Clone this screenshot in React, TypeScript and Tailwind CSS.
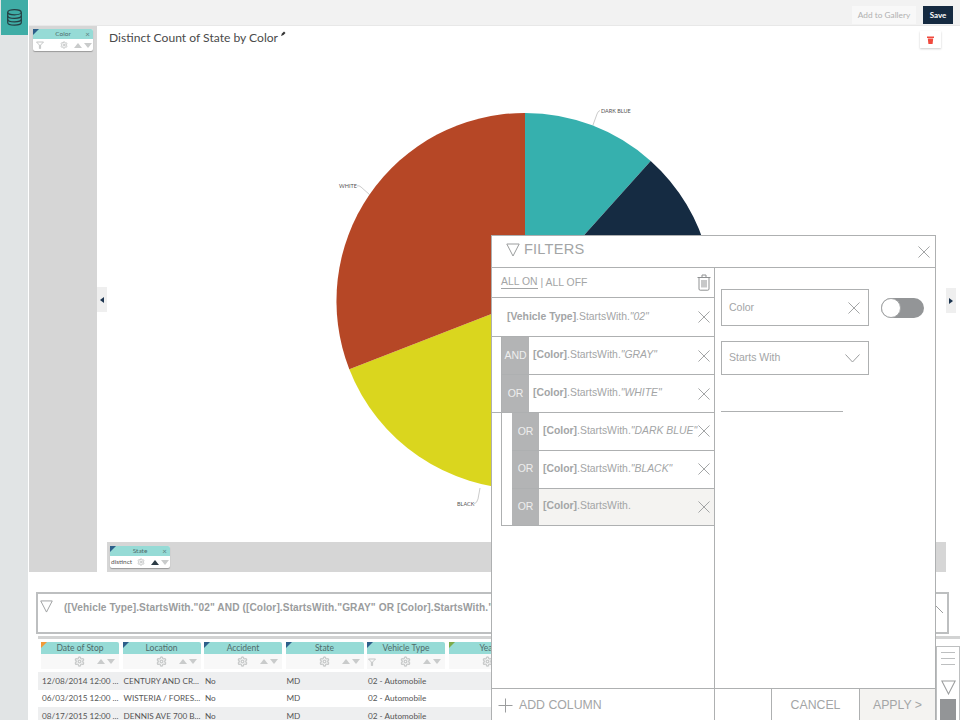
import { Settings } from "lucide-react";

const COLUMNS = [
  { name: "Date of Stop", corner: "border-t-[#f29a38]", funnel: false },
  { name: "Location", corner: "border-t-[#2c5f8a]", funnel: false },
  { name: "Accident", corner: "border-t-[#2c5f8a]", funnel: false },
  { name: "State", corner: "border-t-[#2c5f8a]", funnel: false },
  { name: "Vehicle Type", corner: "border-t-[#2c5f8a]", funnel: true },
  { name: "Year", corner: "border-t-[#7cab4a]", funnel: false },
];

const ROWS = [
  ["12/08/2014 12:00 ...", "CENTURY AND CR...", "No", "MD", "02 - Automobile"],
  ["06/03/2015 12:00 ...", "WISTERIA / FORES...", "No", "MD", "02 - Automobile"],
  ["08/17/2015 12:00 ...", "DENNIS AVE 700 B...", "No", "MD", "02 - Automobile"],
];

function Cross({ size = 13 }: { size?: number }) {
  return (
    <svg width={size} height={size} viewBox="0 0 13 13" className="shrink-0 text-[#9b9d9e]">
      <path d="M0.5 0.5 L12.5 12.5 M12.5 0.5 L0.5 12.5" stroke="currentColor" strokeWidth="1" fill="none" />
    </svg>
  );
}

function Triangle({ w = 14, h = 14 }: { w?: number; h?: number }) {
  return (
    <svg width={w} height={h} viewBox="0 0 14 14" className="shrink-0 text-[#9b9d9e]">
      <path d="M0.8 1 H13.2 L7 13 Z" stroke="currentColor" strokeWidth="1" fill="none" />
    </svg>
  );
}

function Funnel() {
  return (
    <svg width="8" height="8" viewBox="0 0 8 8" className="shrink-0 text-[#c4c6c6]">
      <path d="M0.5 1 H7.5 L4.6 4 V7.5 H3.4 V4 Z" stroke="currentColor" strokeWidth="1" fill="none" />
    </svg>
  );
}

function Sort({ upDark = false }: { upDark?: boolean }) {
  return (
    <div className="flex items-center gap-[2px]">
      <div className={`h-0 w-0 border-x-[4px] border-b-[5px] border-x-transparent ${upDark ? "border-b-[#2b3a44]" : "border-b-[#c9cbcb]"}`} />
      <div className="h-0 w-0 border-x-[4px] border-t-[5px] border-x-transparent border-t-[#c9cbcb]" />
    </div>
  );
}

function Corner({ color }: { color: string }) {
  return <div className={`absolute left-0 top-0 h-0 w-0 border-r-[6px] border-t-[6px] border-r-transparent ${color}`} />;
}

function FieldPill({ name, distinct }: { name: string; distinct?: boolean }) {
  return (
    <div className="relative w-[60px] rounded-[2px] bg-white shadow-[0_1px_1px_#9a9a9a]">
      <div className="flex h-[10px] items-center justify-center rounded-t-[2px] bg-[#96dbd6] text-[6.5px] text-[#4f6b6b]">
        {name}
      </div>
      <Corner color="border-t-[#2c5f8a]" />
      <div className="absolute right-[3px] top-0 text-[8px] leading-[10px] text-[#5f8383]">×</div>
      <div className="flex h-[12px] items-center pl-[1px] pr-[1px] text-[6.5px] text-[#555]">
        {distinct ? <span className="w-[25px]">distinct</span> : <div className="w-[25px] pl-[2px]"><Funnel /></div>}
        <Settings size={8} strokeWidth={3} className="ml-[1px] text-[#c4c6c6]" />
        <div className="ml-auto"><Sort upDark={distinct} /></div>
      </div>
    </div>
  );
}

function Clause({ field, value, block, first, active }: { field: string; value?: string; block: string; first?: boolean; active?: boolean }) {
  return (
    <div className={`flex h-[37.4px] ${first ? "" : "border-t border-[#aeb0b1]"}`}>
      <div className="flex w-[27px] shrink-0 items-center justify-center bg-[#b3b4b5] text-[10.5px] text-[#eeeeee]">
        {block}
      </div>
      <div className={`flex min-w-0 flex-1 items-center pr-[4px] ${active ? "bg-[#f4f3f1]" : ""}`}>
        <div className="min-w-0 flex-1 whitespace-nowrap pb-[2px] pl-[4px] text-[10.4px] text-[#a3a5a6]">
          <b>[{field}]</b>.StartsWith.{value && <i>"{value}"</i>}
        </div>
        <Cross size={12} />
      </div>
    </div>
  );
}

function FiltersDialog() {
  return (
    <div className="absolute left-[491px] top-[235px] flex h-[487px] w-[445px] flex-col border-[1.5px] border-[#aeb0b1] bg-white font-['Liberation_Sans',Arial,sans-serif] text-[#a3a5a6]">
      <div className="flex h-[32px] shrink-0 items-center border-b-[1.5px] border-[#aeb0b1] pl-[14px] pr-[5px]">
        <div className="mb-[4px]"><Triangle /></div>
        <span className="mb-[4px] ml-[4px] text-[14.6px] tracking-[0.2px]">FILTERS</span>
        <div className="ml-auto"><Cross size={12} /></div>
      </div>
      <div className="flex min-h-0 flex-1">
        <div className="w-[223px] shrink-0 border-r border-[#aeb0b1]">
          <div className="flex h-[30px] items-center border-b-[1.5px] border-[#aeb0b1] pl-[9px] pr-[3px] text-[10.4px]">
            <span className="border-b border-[#a3a5a6] leading-[12px]">ALL ON</span>
            <span className="ml-[3px]">| ALL OFF</span>
            <svg width="14" height="17" viewBox="0 0 14 17" fill="none" stroke="#8f9192" strokeWidth="1" className="ml-auto">
              <path d="M0.5 3.5 H13.5 M5 3.5 V1 H9 V3.5 M2 3.5 V15 Q2 16.2 3.2 16.2 H10.8 Q12 16.2 12 15 V3.5 M5 6 V13.5 M7 6 V13.5 M9 6 V13.5" />
            </svg>
          </div>
          <div className="flex h-[39px] items-center border-b-[1.5px] border-[#aeb0b1] pl-[15px] pr-[4px] text-[10.4px]">
            <div className="flex-1 whitespace-nowrap">
              <b>[Vehicle Type]</b>.StartsWith.<i>"02"</i>
            </div>
            <Cross size={12} />
          </div>
          <div className="ml-[9px] border-l border-[#aeb0b1]">
            <Clause field="Color" value="GRAY" block="AND" first />
            <Clause field="Color" value="WHITE" block="OR" />
          </div>
          <div className="border-t border-[#aeb0b1] pl-[9px]">
            <div className="border-b border-l border-[#aeb0b1] pl-[10px]">
              <Clause field="Color" value="DARK BLUE" block="OR" first />
              <Clause field="Color" value="BLACK" block="OR" />
              <Clause field="Color" block="OR" active />
            </div>
          </div>
        </div>
        <div className="flex-1 pl-[6px] pt-[21px]">
          <div className="flex items-center gap-[12px]">
            <div className="flex h-[37px] w-[148px] items-center border border-[#aeb0b1] pl-[7px] pr-[8px] text-[10.5px]">
              <span className="flex-1">Color</span>
              <Cross size={12} />
            </div>
            <div className="relative h-[20px] w-[43px] rounded-full bg-[#939597]">
              <div className="absolute left-0 top-0 h-[20px] w-[20px] rounded-full border border-[#a3a5a6] bg-white" />
            </div>
          </div>
          <div className="mt-[15px] flex h-[34px] w-[148px] items-center border border-[#aeb0b1] pl-[7px] pr-[8px] text-[10.5px]">
            <span className="flex-1">Starts With</span>
            <svg width="15" height="9" viewBox="0 0 15 9" fill="none" stroke="#9b9d9e">
              <path d="M0.5 0.5 L7.5 8 L14.5 0.5" />
            </svg>
          </div>
          <div className="mt-[36px] w-[122px] border-t border-[#aeb0b1]" />
        </div>
      </div>
      <div className="flex h-[33px] shrink-0 border-t border-[#aeb0b1] text-[12.3px]">
        <div className="flex w-[223px] items-center border-r border-[#aeb0b1] pl-[6px]">
          <svg width="15" height="15" viewBox="0 0 15 15" stroke="#9b9d9e" fill="none">
            <path d="M7.5 0.5 V14.5 M0.5 7.5 H14.5" />
          </svg>
          <span className="ml-[6px]">ADD COLUMN</span>
        </div>
        <div className="w-[57px] border-r border-[#aeb0b1]" />
        <div className="flex w-[88px] items-center justify-center border-r border-[#aeb0b1]">CANCEL</div>
        <div className="flex flex-1 items-center justify-center bg-[#f4f3f1]">APPLY &gt;</div>
      </div>
    </div>
  );
}

function PieChart() {
  return (
    <svg viewBox="97 50 863 492" className="h-[492px] w-[863px] shrink-0">
      <path d="M525 301 L525 113 A188 188 0 0 1 650.7 161 Z" fill="#36b0ae" />
      <path d="M525 301 L650.7 161 A188 188 0 0 1 525 489 Z" fill="#152b42" />
      <path d="M525 301 L525 489 A188 188 0 0 1 349.3 369.3 Z" fill="#dad61e" />
      <path d="M525 301 L349.3 369.3 A188 188 0 0 1 525 113 Z" fill="#b64726" />
      <g fill="none" stroke="#a8a8a8" strokeWidth="0.6">
        <path d="M593 125 L597 114 Q598 111 600 110.500" />
        <path d="M370 195 L361 187 Q359 185 357 186" />
        <path d="M480 488 L478 499 Q477 503 474 504" />
      </g>
      <g fill="#555" fontSize="5.5" fontFamily="Lato, sans-serif">
        <text x="601" y="112.500">DARK BLUE</text>
        <text x="339" y="188">WHITE</text>
        <text x="457" y="506">BLACK</text>
      </g>
    </svg>
  );
}

function DataTable() {
  return (
    <div className="min-w-0 flex-1 overflow-hidden text-[8.2px] text-[#555]">
      <div className="flex h-[31px] pl-[3px] pt-[3px] text-[8.5px]">
        {COLUMNS.map((col) => (
          <div key={col.name} className="w-[81.5px] shrink-0">
            <div className="w-[78px] rounded-t-[2px] bg-[#f8f8f8]">
              <div className="relative flex h-[12px] items-center justify-center rounded-t-[2px] bg-[#96dbd6] text-[#4f6b6b]">
                {col.name}
                <Corner color={col.corner} />
              </div>
              <div className="flex h-[15px] items-center pl-[1px] pr-[3px]">
                {col.funnel && <Funnel />}
                <Settings size={11} strokeWidth={3} className={`${col.funnel ? "ml-[24px]" : "ml-[32px]"} text-[#c9cbcb]`} />
                <div className="ml-auto pr-[1px]"><Sort /></div>
              </div>
            </div>
          </div>
        ))}
      </div>
      <div className="mt-[2px]">
        {ROWS.map((row, i) => (
          <div key={i} className={`flex h-[17.5px] items-center pl-[4px] ${i % 2 === 0 ? "bg-[#eeeff0]" : "bg-white"}`}>
            {row.map((cell, j) => (
              <div key={j} className="w-[81.5px] shrink-0 whitespace-nowrap">{cell}</div>
            ))}
          </div>
        ))}
      </div>
    </div>
  );
}

export default function App() {
  return (
    <div className="relative flex h-[720px] w-[960px] overflow-hidden bg-white font-['Lato',sans-serif]">
      <aside className="w-[29px] shrink-0 border-r border-white bg-[#e1e4e5] pl-[1px]">
        <div className="flex h-[35px] w-[27px] items-center justify-center bg-[#3fada6]">
          <svg width="15" height="17" viewBox="0 0 15 17" fill="none" stroke="#263e42" strokeWidth="1.2">
            <ellipse cx="7.5" cy="3.2" rx="6.8" ry="2.6" />
            <path d="M0.7 3.2 V13.6 C0.7 15 3.7 16.2 7.500 16.2 C11.300 16.2 14.300 15 14.300 13.600 V3.200" />
            <path d="M0.7 6.800 C0.7 8.200 3.700 9.400 7.500 9.400 C11.300 9.400 14.300 8.200 14.300 6.800" />
            <path d="M0.7 10.200 C0.7 11.600 3.700 12.800 7.500 12.800 C11.300 12.800 14.300 11.600 14.300 10.200" />
          </svg>
        </div>
      </aside>

      <div className="flex min-w-0 flex-1 flex-col">
        <header className="flex h-[26px] shrink-0 items-center justify-end gap-[7px] border-b border-[#e8e8e8] bg-[#f2f2f2] pr-[7px] pt-[5px]">
          <button className="h-[18px] w-[64px] bg-[#f8f8f8] text-[8.3px] text-[#b0b0b0]">Add to Gallery</button>
          <button className="h-[18px] w-[30px] bg-[#152a41] text-[8px] font-bold text-white">Save</button>
        </header>

        <div className="flex h-[546px] shrink-0">
          <div className="w-[68px] shrink-0 bg-[#d6d6d6] pl-[4px] pt-[3px]">
            <FieldPill name="Color" />
          </div>
          <main className="relative flex min-w-0 flex-1 flex-col">
            <div className="flex h-[24px] shrink-0 items-start justify-between pl-[12px] pr-[19px]">
              <h1 className="flex pt-[4px] text-[12.1px] leading-[15px] text-[#4a4a4a]">
                Distinct Count of State by Color
                <svg width="5" height="5" viewBox="0 0 5 5" className="ml-[3px] mt-[1px]">
                  <path d="M0 5 L1 2.500 L3 0.500 L4.500 2 L2.500 4 Z" fill="#333" />
                </svg>
              </h1>
              <div className="mt-[5px] flex h-[17px] w-[21px] items-center justify-center bg-white shadow-[0_1px_2px_#cccccc]">
                <svg width="7" height="8" viewBox="0 0 7 8" fill="#f04a3e">
                  <path d="M0 0.500 H7 V2 H0 Z M0.800 2.500 H6.200 L5.600 8 H1.400 Z" />
                </svg>
              </div>
            </div>
            <PieChart />
            <div className="ml-[10px] flex h-[30px] w-[839px] shrink-0 items-start bg-[#d6d6d6] pl-[3px] pt-[4px]">
              <FieldPill name="State" distinct />
            </div>
            <div className="absolute left-0 top-[261px] flex h-[25px] w-[10px] items-center justify-center bg-[#efefef]">
              <div className="h-0 w-0 border-y-[3px] border-r-[4px] border-y-transparent border-r-[#1d3550]" />
            </div>
            <div className="absolute left-[849px] top-[262px] flex h-[25px] w-[10px] items-center justify-center bg-[#efefef]">
              <div className="h-0 w-0 border-y-[3px] border-l-[4px] border-y-transparent border-l-[#1d3550]" />
            </div>
          </main>
        </div>

        <section className="flex min-h-0 flex-1 flex-col pl-[7px] pt-[20px]">
          <div className="flex h-[42px] w-[913px] shrink-0 items-start overflow-hidden border-2 border-[#bdbfc0] pl-[2px] pt-[6px]">
            <Triangle w={13} h={13} />
            <div className="ml-[11px] min-w-0 flex-1 overflow-hidden whitespace-nowrap font-['Liberation_Sans',Arial,sans-serif] text-[10.15px] font-bold tracking-[0.1px] text-[#9a9c9d]">
              ([Vehicle Type].StartsWith."02" AND ([Color].StartsWith."GRAY" OR [Color].StartsWith."WHITE"
            </div>
            <svg width="8" height="8" viewBox="0 0 8 8" className="mr-[4px] mt-[5px] shrink-0" stroke="#9b9d9e">
              <path d="M0 0 L8 8" />
            </svg>
          </div>
          <div className="ml-[2px] mt-[2px] h-[3px] shrink-0 bg-[#d2d3d3]" />
          <div className="ml-[2px] flex min-h-0 flex-1">
            <DataTable />
            <div className="mt-[7px] flex w-[24px] shrink-0 flex-col border-l border-t border-r border-[#bdbfc0] px-[3px] pt-[5px]">
              <div className="flex flex-col gap-[5px] px-[1px]">
                <div className="h-px bg-[#bdbfc0]" />
                <div className="h-px bg-[#bdbfc0]" />
                <div className="h-px bg-[#bdbfc0]" />
              </div>
              <div className="mt-[15px] flex justify-center"><Triangle w={15} h={15} /></div>
              <div className="mt-[4px] h-[30px] bg-[#939597]" />
            </div>
          </div>
        </section>
      </div>

      <FiltersDialog />
    </div>
  );
}
